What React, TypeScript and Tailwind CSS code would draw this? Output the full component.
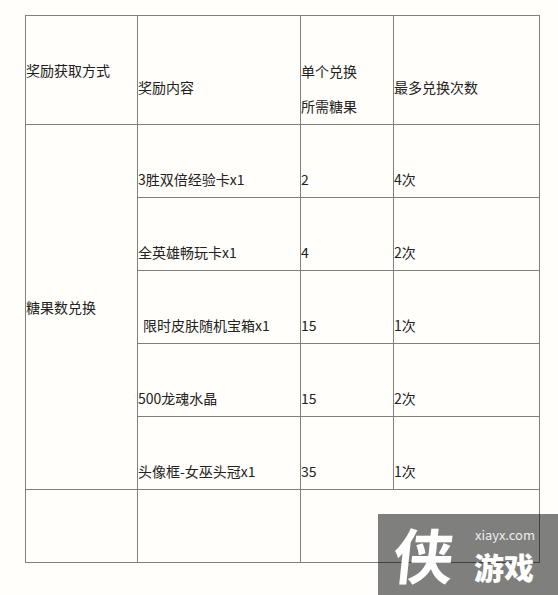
import React from "react"

const font = { fontFamily: '"Noto Sans CJK SC", "Noto Sans", sans-serif' }

type Item = { name: string; cost: string; times: string; indent?: boolean }

const items: Item[] = [
  { name: "3胜双倍经验卡x1", cost: "2", times: "4次" },
  { name: "全英雄畅玩卡x1", cost: "4", times: "2次" },
  { name: "限时皮肤随机宝箱x1", cost: "15", times: "1次", indent: true },
  { name: "500龙魂水晶", cost: "15", times: "2次" },
  { name: "头像框-女巫头冠x1", cost: "35", times: "1次" },
]

function Cell({ children, className = "" }: { children?: React.ReactNode; className?: string }) {
  return (
    <div className={`flex flex-col bg-[#fffefb] text-[14px] leading-[20px] text-[#222] ${className}`}>
      {children}
    </div>
  )
}

export default function App() {
  return (
    <div className="relative h-[595px] w-[558px] overflow-hidden bg-[#fffefb]" style={font}>
      <div className="pl-[25px] pt-[15px]">
        <div className="grid w-[515px] grid-cols-[111px_162px_92px_145px] grid-rows-[108px_repeat(6,72px)] gap-px border border-[#808080] bg-[#808080]">
          <Cell className="justify-end pb-[44px]">奖励获取方式</Cell>
          <Cell className="justify-end pb-[27px]">奖励内容</Cell>
          <Cell className="justify-end gap-[15px] pb-[8px]">
            <span>单个兑换</span>
            <span>所需糖果</span>
          </Cell>
          <Cell className="justify-end pb-[27px]">最多兑换次数</Cell>

          <Cell className="row-span-5 justify-center">糖果数兑换</Cell>
          {items.map((it) => (
            <React.Fragment key={it.name}>
              <Cell className={`justify-end pb-[8px] ${it.indent ? "pl-[5px]" : ""}`}>{it.name}</Cell>
              <Cell className="justify-end pb-[8px]">{it.cost}</Cell>
              <Cell className="justify-end pb-[8px]">{it.times}</Cell>
            </React.Fragment>
          ))}

          <Cell />
          <Cell />
          <Cell className="col-span-2" />
        </div>
      </div>

      {/* watermark */}
      <div className="absolute left-[378px] top-[514px] h-[81px] w-[180px] bg-black/50">
        <span
          className="absolute left-[16px] top-[9px] -skew-x-6 text-[60px] font-semibold leading-none text-white"
          style={font}
        >
          侠
        </span>
        <span className="absolute left-[97px] top-[13px] text-[13px] leading-[16px] text-[#eee]" style={font}>
          xiayx.com
        </span>
        <span className="absolute left-[96px] top-[37px] text-[30px] font-black leading-none text-white" style={font}>
          游戏
        </span>
      </div>
    </div>
  )
}
